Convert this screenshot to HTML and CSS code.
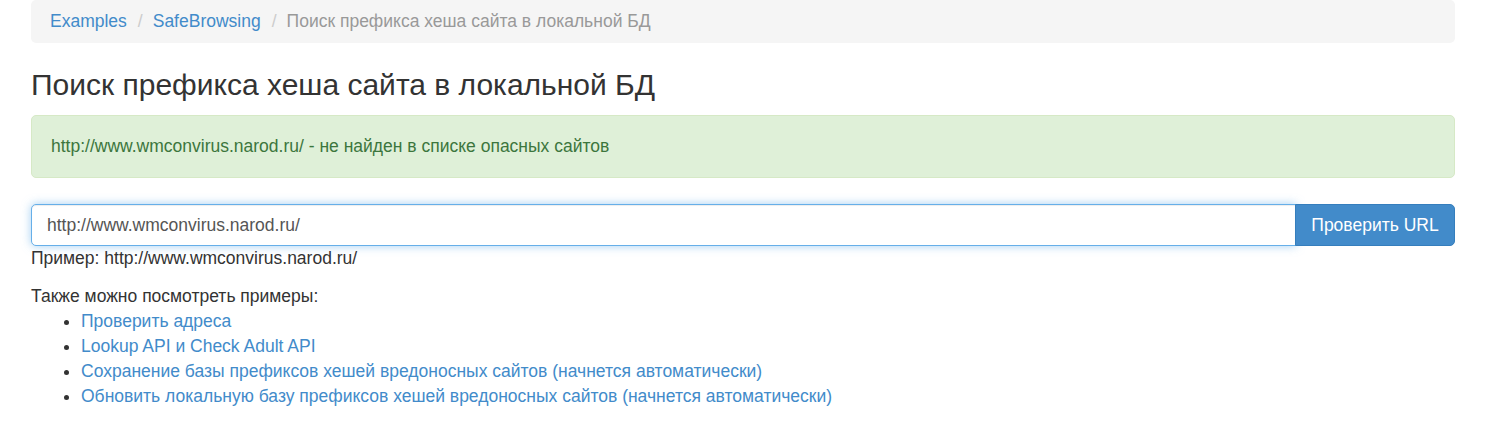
FILE: index.html
```html
<!DOCTYPE html>
<html lang="ru">
<head>
  <meta charset="UTF-8">
  <title>Поиск префикса хеша сайта в локальной БД</title>
  <link rel="stylesheet" href="styles.css">
</head>
<body>
  <div class="container">
    <ol class="breadcrumb">
      <li><a href="#">Examples</a></li>
      <li><a href="#">SafeBrowsing</a></li>
      <li class="active">Поиск префикса хеша сайта в локальной БД</li>
    </ol>

    <h3 class="page-title">Поиск префикса хеша сайта в локальной БД</h3>

    <div class="alert alert-success">http://www.wmconvirus.narod.ru/ - не найден в списке опасных сайтов</div>

    <form class="check-form">
      <div class="input-group">
        <input type="text" class="form-control" value="http://www.wmconvirus.narod.ru/">
        <button type="submit" class="btn-primary">Проверить URL</button>
      </div>
      <p class="help-block">Пример: http://www.wmconvirus.narod.ru/</p>
    </form>

    <p class="examples-title">Также можно посмотреть примеры:</p>
    <ul class="examples">
      <li><a href="#">Проверить адреса</a></li>
      <li><a href="#">Lookup API и Check Adult API</a></li>
      <li><a href="#">Сохранение базы префиксов хешей вредоносных сайтов (начнется автоматически)</a></li>
      <li><a href="#">Обновить локальную базу префиксов хешей вредоносных сайтов (начнется автоматически)</a></li>
    </ul>
  </div>
</body>
</html>
```

FILE: styles.css
```css
body {
  margin: 0;
  font-family: "Liberation Sans", Arial, sans-serif;
  font-size: 17.5px;
  line-height: 25px;
  color: #333;
  background-color: #fff;
}

a {
  color: #428bca;
  text-decoration: none;
}

.container {
  padding: 0 30px 0 31px;
}

.breadcrumb {
  list-style: none;
  margin: 0 0 25px;
  padding: 9px 19px;
  background-color: #f5f5f5;
  border-radius: 5px;
  display: flex;
}

.breadcrumb li + li::before {
  content: "/";
  padding: 0 10px 0 11px;
  color: #ccc;
}

.breadcrumb .active {
  color: #999;
}

.page-title {
  margin: 0 0 14px;
  font-size: 30px;
  font-weight: 500;
  line-height: 33px;
}

.alert {
  padding: 18px 19px;
  border: 1px solid transparent;
  border-radius: 5px;
  margin-bottom: 26px;
}

.alert-success {
  background-color: #dff0d8;
  border-color: #d6e9c6;
  color: #3c763d;
}

.check-form {
  margin: 0;
}

.input-group {
  display: flex;
  height: 42px;
}

.form-control {
  flex: 1;
  box-sizing: border-box;
  height: 42px;
  padding: 7px 15px;
  font-family: inherit;
  font-size: 17.5px;
  color: #555;
  border: 1px solid #66afe9;
  border-radius: 5px 0 0 5px;
  outline: 0;
  box-shadow: inset 0 1px 1px rgba(0, 0, 0, .075), 0 0 10px rgba(102, 175, 233, .6);
}

.btn-primary {
  box-sizing: border-box;
  width: 160px;
  height: 42px;
  margin-left: -1px;
  padding: 7px 15px;
  font-family: inherit;
  font-size: 17.5px;
  color: #fff;
  background-color: #428bca;
  border: 1px solid #357ebd;
  border-radius: 0 5px 5px 0;
  cursor: pointer;
}

.help-block {
  margin: 0 0 13px;
}

.examples-title {
  margin: 0;
}

.examples {
  margin: 0;
  padding-left: 50px;
}
```
